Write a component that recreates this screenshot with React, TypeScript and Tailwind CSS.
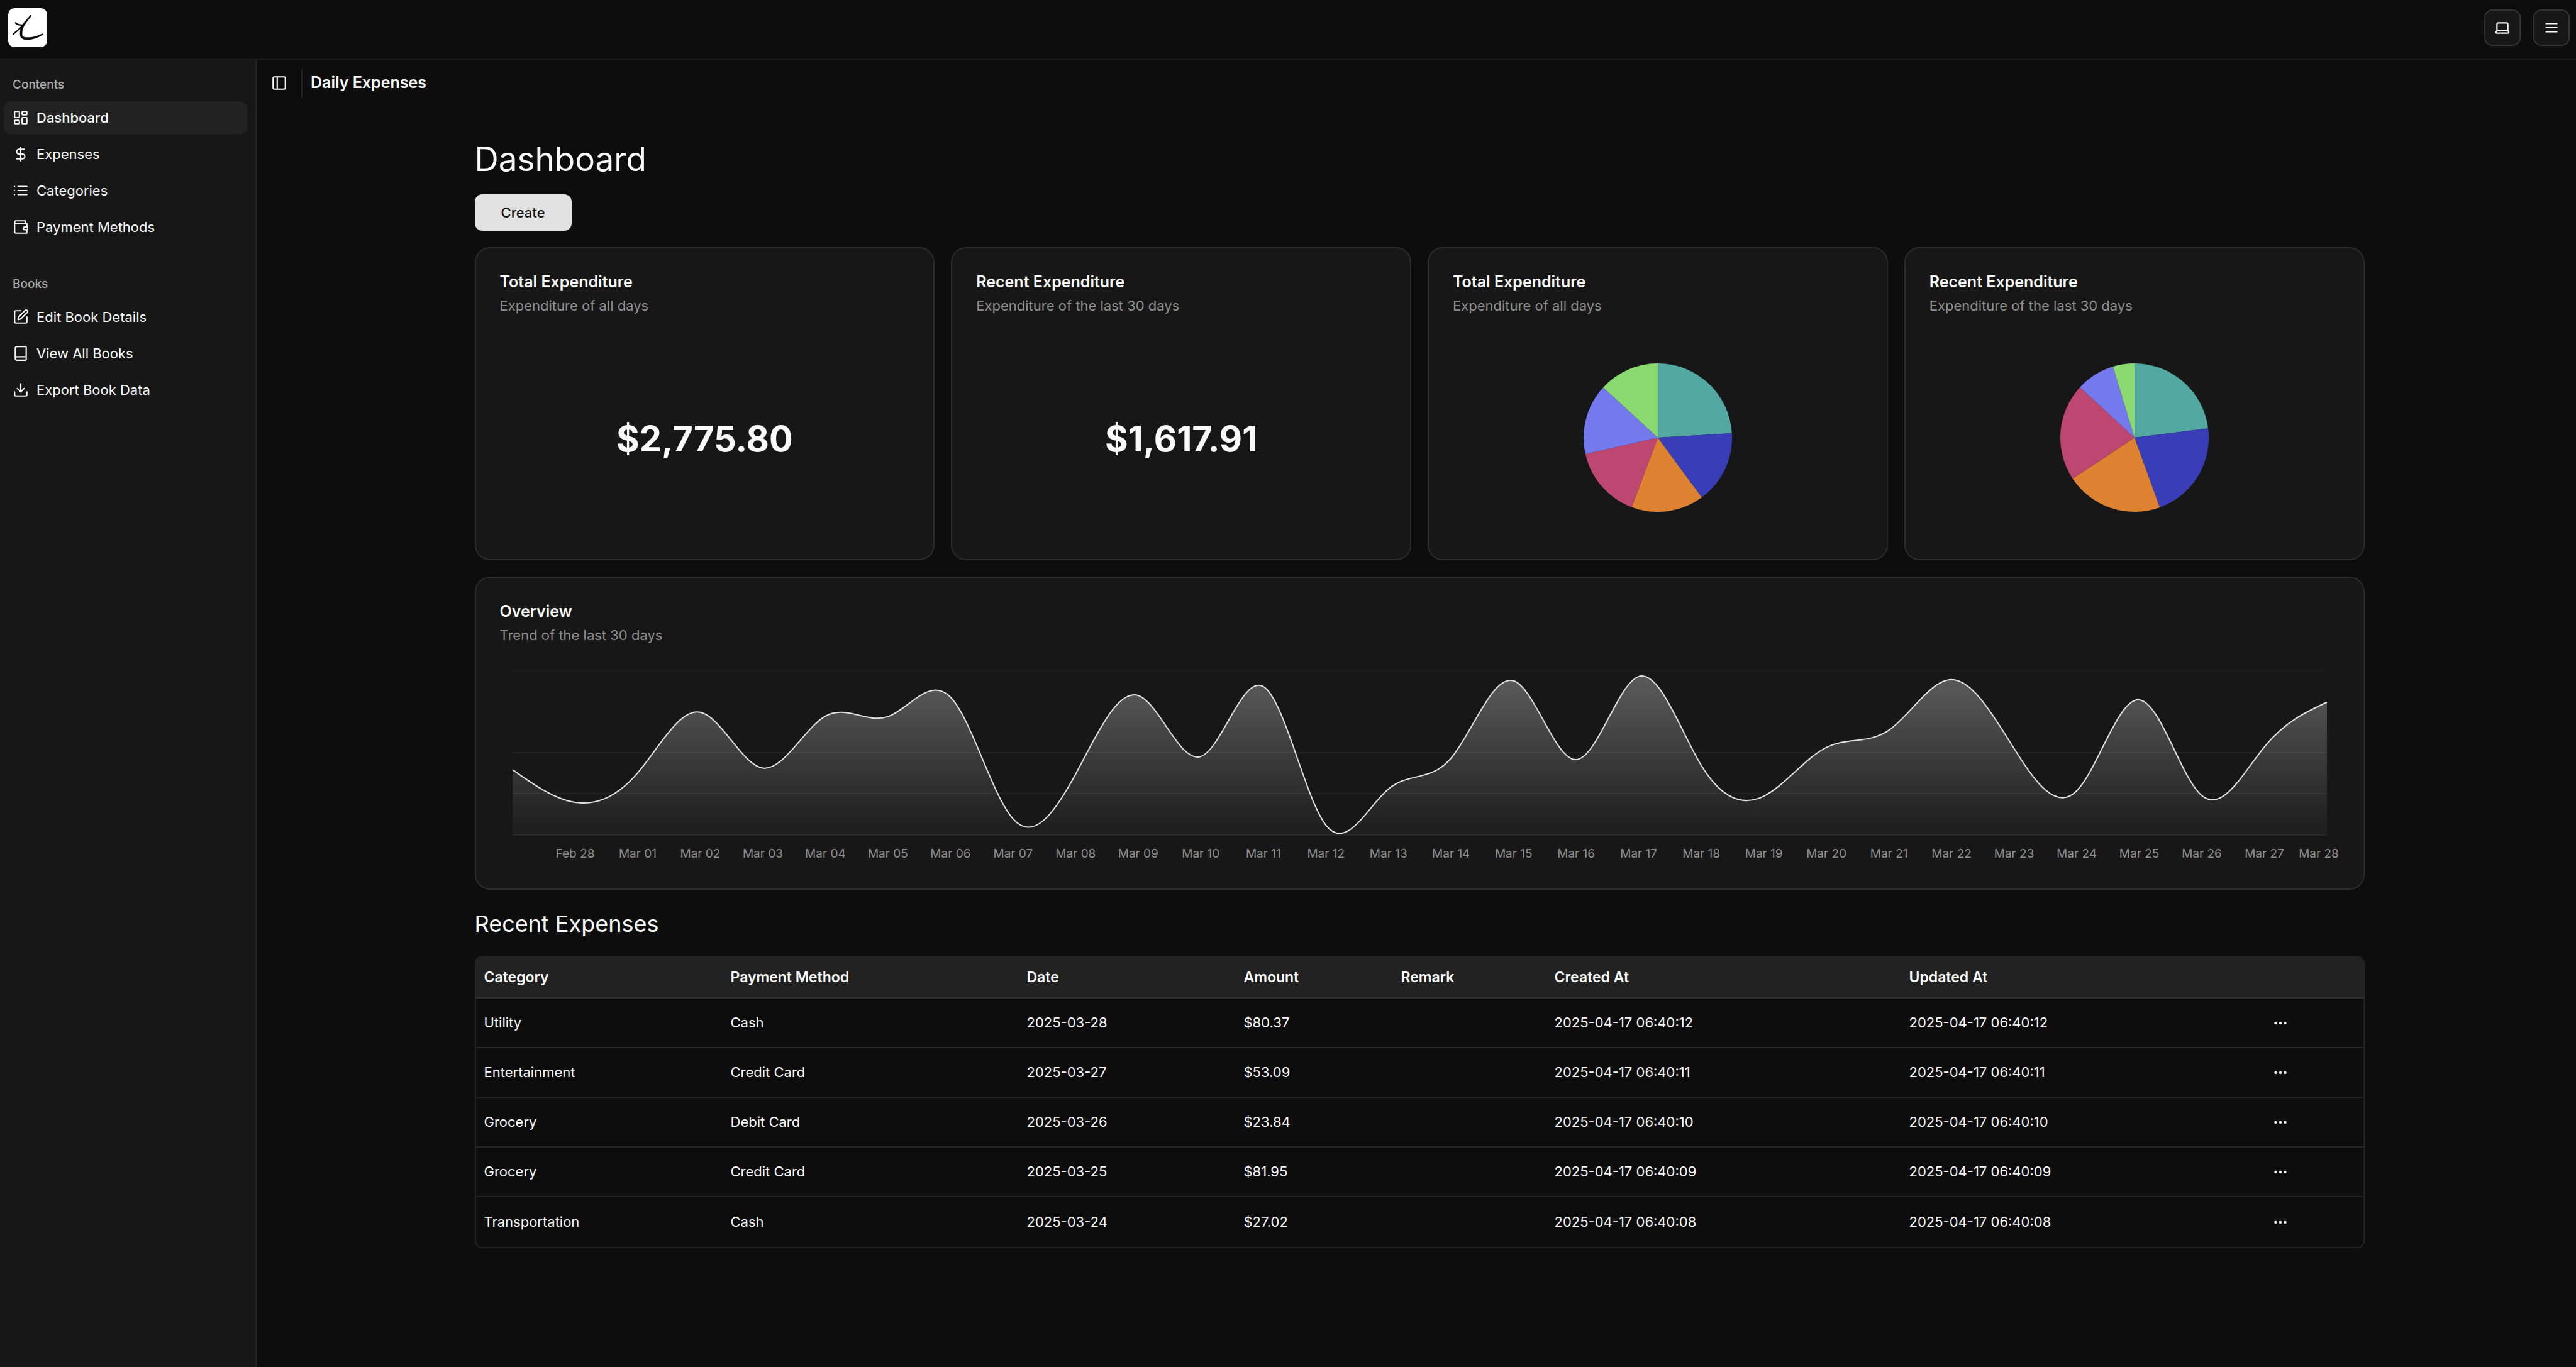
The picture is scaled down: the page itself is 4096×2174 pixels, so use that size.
import type { ReactNode } from "react";
import {
  Book,
  DollarSign,
  Download,
  Ellipsis,
  LayoutDashboard,
  PanelLeft,
  SquarePen,
} from "lucide-react";

function StrokeIcon({ children }: { children: ReactNode }) {
  return (
    <svg
      viewBox="0 0 24 24"
      className="size-[26px] shrink-0"
      fill="none"
      stroke="currentColor"
      strokeWidth={2}
      strokeLinecap="round"
      strokeLinejoin="round"
      aria-hidden="true"
    >
      {children}
    </svg>
  );
}

function Logo() {
  return (
    <a href="#home" aria-label="Home" className="block size-[62px] overflow-hidden rounded-[10px] bg-white">
      <svg viewBox="0 0 228 228" className="size-full" fill="none" stroke="#050505" strokeLinecap="round" strokeLinejoin="round">
        <path
          fill="#050505"
          strokeWidth={3}
          d="M130 43 C112 62 92 84 77 107 C70 126 69 148 71 160 C74 176 86 183 112 183 C146 183 178 170 203 154 C204 151 202 149 199 150 C172 164 142 173 115 172 C92 171 82 168 81 155 C80 138 83 122 91 106 C103 84 120 65 134 47 C136 43 133 41 130 43 Z"
        />
        <path strokeWidth={8} d="M30 152 C46 138 64 124 82 105" />
        <path strokeWidth={8} d="M43 86 C52 95 66 99 84 99" />
      </svg>
    </a>
  );
}

type NavItem = { label: string; icon: ReactNode; active?: boolean };

const contents: NavItem[] = [
  { label: "Dashboard", icon: <LayoutDashboard className="size-[26px] shrink-0" />, active: true },
  { label: "Expenses", icon: <DollarSign className="size-[26px] shrink-0" /> },
  {
    label: "Categories",
    icon: (
      <StrokeIcon>
        <path d="M3 12h.01M3 18h.01M3 6h.01M8 12h13M8 18h13M8 6h13" />
      </StrokeIcon>
    ),
  },
  {
    label: "Payment Methods",
    icon: (
      <StrokeIcon>
        <path d="M21 12V7H5a2 2 0 0 1 0-4h14v4" />
        <path d="M3 5v14a2 2 0 0 0 2 2h16v-5" />
        <path d="M18 12a2 2 0 0 0 0 4h4v-4Z" />
      </StrokeIcon>
    ),
  },
];

const books: NavItem[] = [
  { label: "Edit Book Details", icon: <SquarePen className="size-[26px] shrink-0" /> },
  { label: "View All Books", icon: <Book className="size-[26px] shrink-0" /> },
  { label: "Export Book Data", icon: <Download className="size-[26px] shrink-0" /> },
];

function NavGroup({ title, items }: { title: string; items: NavItem[] }) {
  return (
    <section>
      <h2 className="flex h-[52px] items-center px-[14px] text-[19px] font-medium text-[#acacac]">{title}</h2>
      <ul className="flex flex-col gap-[6px]">
        {items.map((item) => (
          <li key={item.label}>
            <a
              href="#nav"
              aria-current={item.active ? "page" : undefined}
              className={
                item.active
                  ? "flex h-[52px] items-center gap-3 rounded-xl bg-[#222222] px-[14px] text-[22px] font-medium"
                  : "flex h-[52px] items-center gap-3 rounded-xl px-[14px] text-[22px]"
              }
            >
              {item.icon}
              <span>{item.label}</span>
            </a>
          </li>
        ))}
      </ul>
    </section>
  );
}

function Card({ title, subtitle, children }: { title: string; subtitle: string; children: ReactNode }) {
  return (
    <section className="flex min-h-[498px] flex-col rounded-3xl border-2 border-[#2b2b2b] bg-[#171717] px-[38px] pt-[39px]">
      <h2 className="text-[25px] leading-7 font-semibold">{title}</h2>
      <p className="mt-2 text-[22px] leading-8 text-[#8f8f8f]">{subtitle}</p>
      {children}
    </section>
  );
}

function Amount({ value }: { value: string }) {
  return (
    <div className="flex flex-1 items-center justify-center pt-1">
      <p className="text-[56px] leading-none font-bold">{value}</p>
    </div>
  );
}

const pieColors = ["#53a8a2", "#393db8", "#dd8230", "#be4772", "#7579ee", "#8bd971"];

function Pie({ stops, label }: { stops: number[]; label: string }) {
  const point = (deg: number) => {
    const a = (deg * Math.PI) / 180;
    return `${118 + 118 * Math.sin(a)} ${118 - 118 * Math.cos(a)}`;
  };
  return (
    <div className="flex flex-1 items-center justify-center">
      <svg viewBox="0 0 236 236" className="size-[236px]" role="img" aria-label={label}>
        {pieColors.map((color, i) => (
          <path key={color} fill={color} d={`M118 118L${point(stops[i])}A118 118 0 0 1 ${point(stops[i + 1])}Z`} />
        ))}
      </svg>
    </div>
  );
}

const trend = [
  272, 136, 259, 511, 279, 495, 493, 574, 67, 254, 581, 327, 618, 41, 192, 320, 642, 314, 660, 290, 162, 365, 437, 647,
  360, 184, 563, 164, 367, 553,
];

const dayLabels = [
  "Feb 28",
  ...Array.from({ length: 28 }, (_, i) => `Mar ${String(i + 1).padStart(2, "0")}`),
];

const plot = { left: 20, right: 2905, top: 34, bottom: 296 };
const step = (plot.right - plot.left) / (trend.length - 1);

/* Natural cubic spline control points along one axis. */
function controls(v: number[]): [number[], number[]] {
  const n = v.length - 1;
  const a = new Array<number>(n);
  const b = new Array<number>(n);
  const r = new Array<number>(n);
  a[0] = 0;
  b[0] = 2;
  r[0] = v[0] + 2 * v[1];
  for (let i = 1; i < n - 1; i++) {
    a[i] = 1;
    b[i] = 4;
    r[i] = 4 * v[i] + 2 * v[i + 1];
  }
  a[n - 1] = 2;
  b[n - 1] = 7;
  r[n - 1] = 8 * v[n - 1] + v[n];
  for (let i = 1; i < n; i++) {
    const m = a[i] / b[i - 1];
    b[i] -= m;
    r[i] -= m * r[i - 1];
  }
  a[n - 1] = r[n - 1] / b[n - 1];
  for (let i = n - 2; i >= 0; i--) a[i] = (r[i] - a[i + 1]) / b[i];
  b[n - 1] = (v[n] + a[n - 1]) / 2;
  for (let i = 0; i < n - 1; i++) b[i] = 2 * v[i + 1] - a[i + 1];
  return [a, b];
}

function TrendChart() {
  const xs = trend.map((_, i) => plot.left + i * step);
  const ys = trend.map((v) => plot.bottom - v * 0.382);
  const [x1, x2] = controls(xs);
  const [y1, y2] = controls(ys);
  const line =
    `M${xs[0]} ${ys[0]}` +
    x1.map((_, i) => `C${x1[i]} ${y1[i]} ${x2[i]} ${y2[i]} ${xs[i + 1]} ${ys[i + 1]}`).join("");
  return (
    <svg viewBox="0 0 2925 344" className="mt-[6px] w-full" role="img" aria-label="Expenditure trend of the last 30 days">
      <defs>
        <linearGradient id="trend-fill" x1="0" y1="0" x2="0" y2="1">
          <stop offset="5%" stopColor="#e2e2e2" stopOpacity={0.32} />
          <stop offset="95%" stopColor="#e2e2e2" stopOpacity={0.04} />
        </linearGradient>
      </defs>
      <path d={`M${plot.left} 34H${plot.right}`} stroke="#222222" strokeWidth={1} />
      <path d={`M${plot.left} 165H${plot.right}M${plot.left} 230H${plot.right}M${plot.left} 296H${plot.right}`} stroke="#232323" strokeWidth={2} />
      <path d={`${line}V${plot.bottom}H${plot.left}Z`} fill="url(#trend-fill)" />
      <path d={line} fill="none" stroke="#e2e2e2" strokeWidth={2} />
      <g fill="#8f8f8f" fontSize={19} textAnchor="middle">
        {dayLabels.map((label, i) => (
          <text key={label} x={i === dayLabels.length - 1 ? 2892 : plot.left + (i + 1) * step} y={332}>
            {label}
          </text>
        ))}
      </g>
    </svg>
  );
}

const columns = [
  { name: "Category", width: "w-[392px]" },
  { name: "Payment Method", width: "w-[471px]" },
  { name: "Date", width: "w-[345px]" },
  { name: "Amount", width: "w-[250px]" },
  { name: "Remark", width: "w-[244px]" },
  { name: "Created At", width: "w-[564px]" },
  { name: "Updated At", width: "w-[564px]" },
];

const expenses = [
  ["Utility", "Cash", "2025-03-28", "$80.37", "", "2025-04-17 06:40:12", "2025-04-17 06:40:12"],
  ["Entertainment", "Credit Card", "2025-03-27", "$53.09", "", "2025-04-17 06:40:11", "2025-04-17 06:40:11"],
  ["Grocery", "Debit Card", "2025-03-26", "$23.84", "", "2025-04-17 06:40:10", "2025-04-17 06:40:10"],
  ["Grocery", "Credit Card", "2025-03-25", "$81.95", "", "2025-04-17 06:40:09", "2025-04-17 06:40:09"],
  ["Transportation", "Cash", "2025-03-24", "$27.02", "", "2025-04-17 06:40:08", "2025-04-17 06:40:08"],
];

function ExpensesTable() {
  return (
    <div className="overflow-hidden rounded-xl border-2 border-[#232323]">
      <table className="w-full table-fixed border-separate border-spacing-0 text-left text-[22px]">
        <thead>
          <tr className="bg-[#222222] text-[23px]">
            {columns.map((c) => (
              <th key={c.name} scope="col" className={`${c.width} h-[66px] border-b-2 border-[#303030] px-[13px] font-semibold`}>
                {c.name}
              </th>
            ))}
            <td className="w-[171px] border-b-2 border-[#303030]" />
          </tr>
        </thead>
        <tbody className="[&>tr:not(:last-child)>td]:border-b-2 [&>tr>td]:border-[#262626]">
          {expenses.map((row) => (
            <tr key={row[5]}>
              {row.map((cell, i) => (
                <td key={i} className="h-[79px] px-[13px]">
                  {cell}
                </td>
              ))}
              <td className="px-[13px]">
                <button type="button" aria-label="Open row menu" className="flex size-[52px] items-center justify-center rounded-xl">
                  <Ellipsis className="size-[26px]" />
                </button>
              </td>
            </tr>
          ))}
        </tbody>
      </table>
    </div>
  );
}

export default function App() {
  return (
    <div className="flex min-h-screen flex-col bg-[#0d0d0d] font-[Inter,sans-serif] text-[#fafafa]">
      <header className="flex h-24 items-start justify-between border-b-2 border-[#222222] pt-[13px] pr-[10px] pl-[13px]">
        <Logo />
        <div className="flex gap-5 pt-[2px]">
          <button type="button" aria-label="Change theme" className="flex size-[58px] items-center justify-center rounded-[13px] border-2 border-[#333333] bg-[#171717]">
            <StrokeIcon>
              <path d="M20 16V7a2 2 0 0 0-2-2H6a2 2 0 0 0-2 2v9m16 0H4m16 0 1.28 2.55a1 1 0 0 1-.9 1.45H3.62a1 1 0 0 1-.9-1.45L4 16" />
            </StrokeIcon>
          </button>
          <button type="button" aria-label="Open menu" className="flex size-[58px] items-center justify-center rounded-[13px] border-2 border-[#333333] bg-[#171717]">
            <StrokeIcon>
              <path d="M4 6h16M4 12h16M4 18h16" />
            </StrokeIcon>
          </button>
        </div>
      </header>

      <div className="flex flex-1">
        <nav aria-label="Sidebar" className="flex w-[408px] shrink-0 flex-col gap-[39px] border-r-2 border-[#232323] bg-[#171717] pt-[13px] pr-[13px] pl-[6px]">
          <NavGroup title="Contents" items={contents} />
          <NavGroup title="Books" items={books} />
        </nav>

        <div className="flex min-w-0 flex-1 flex-col pl-[10px]">
          <div className="flex h-[72px] items-center pl-[2px]">
            <button type="button" aria-label="Toggle sidebar" className="flex size-[48px] items-center justify-center rounded-xl">
              <PanelLeft className="size-[26px]" />
            </button>
            <div className="ml-[11px] h-[45px] w-[2px] bg-[#262626]" />
            <p className="ml-[13px] text-[25px] font-semibold">Daily Expenses</p>
          </div>

          <main className="mx-auto flex w-full max-w-[3005px] flex-col">
            <h1 className="mt-[50px] text-[53px] leading-[70px]">Dashboard</h1>
            <button type="button" className="mt-[21px] h-[58px] self-start rounded-xl bg-[#e2e2e2] px-[42px] text-[22px] font-medium text-[#171717]">
              Create
            </button>

            <div className="mt-[26px] grid grid-cols-4 gap-[26px]">
              <Card title="Total Expenditure" subtitle="Expenditure of all days">
                <Amount value="$2,775.80" />
              </Card>
              <Card title="Recent Expenditure" subtitle="Expenditure of the last 30 days">
                <Amount value="$1,617.91" />
              </Card>
              <Card title="Total Expenditure" subtitle="Expenditure of all days">
                <Pie label="Total expenditure by category" stops={[0, 86.6, 143.7, 200.6, 257.3, 312.6, 360]} />
              </Card>
              <Card title="Recent Expenditure" subtitle="Expenditure of the last 30 days">
                <Pie label="Recent expenditure by category" stops={[0, 82.8, 160.1, 236.5, 312.7, 343.1, 360]} />
              </Card>
            </div>

            <div className="mt-[26px] grid">
              <Card title="Overview" subtitle="Trend of the last 30 days">
                <TrendChart />
              </Card>
            </div>

            <h2 className="mt-[27px] mb-[24px] text-[36px] leading-[54px]">Recent Expenses</h2>
            <ExpensesTable />
          </main>
        </div>
      </div>
    </div>
  );
}
